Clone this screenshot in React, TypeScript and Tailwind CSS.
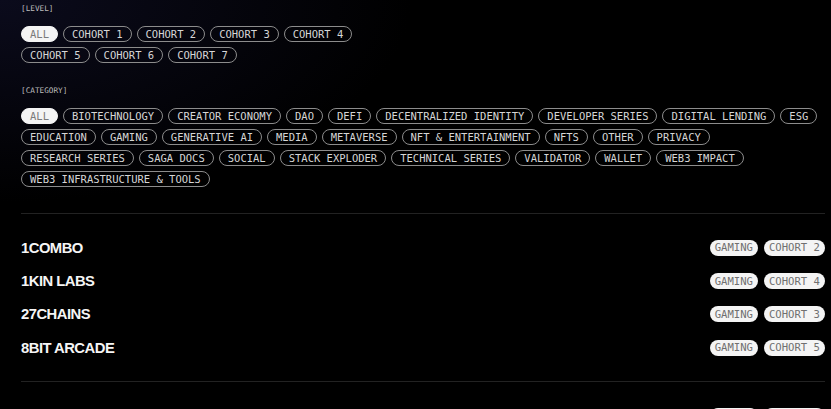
import React from 'react'

const levels = ['ALL', 'COHORT 1', 'COHORT 2', 'COHORT 3', 'COHORT 4', 'COHORT 5', 'COHORT 6', 'COHORT 7']

const categories = [
  'ALL', 'BIOTECHNOLOGY', 'CREATOR ECONOMY', 'DAO', 'DEFI', 'DECENTRALIZED IDENTITY',
  'DEVELOPER SERIES', 'DIGITAL LENDING', 'ESG', 'EDUCATION', 'GAMING', 'GENERATIVE AI',
  'MEDIA', 'METAVERSE', 'NFT & ENTERTAINMENT', 'NFTS', 'OTHER', 'PRIVACY',
  'RESEARCH SERIES', 'SAGA DOCS', 'SOCIAL', 'STACK EXPLODER', 'TECHNICAL SERIES',
  'VALIDATOR', 'WALLET', 'WEB3 IMPACT', 'WEB3 INFRASTRUCTURE & TOOLS',
]

const groups = [
  [
    { name: '1COMBO', tags: ['GAMING', 'COHORT 2'] },
    { name: '1KIN LABS', tags: ['GAMING', 'COHORT 4'] },
    { name: '27CHAINS', tags: ['GAMING', 'COHORT 3'] },
    { name: '8BIT ARCADE', tags: ['GAMING', 'COHORT 5'] },
  ],
  [
    { name: 'ABSTRACT', tags: ['GAMING', 'COHORT 6'] },
  ],
]

const mono = "font-['DejaVu_Sans_Mono','Liberation_Mono',monospace]"

function FilterPill({ label, active }: { label: string; active?: boolean }) {
  return (
    <button
      className={`h-[16px] rounded-full border px-[8px] text-[10.5px] leading-none flex items-center ${mono} ${
        active ? 'bg-[#f4f4f4] border-[#f4f4f4] text-[#7a7a7a]' : 'border-[#8c8c8c] text-[#d6d6d6]'
      }`}
    >
      {label}
    </button>
  )
}

function FilterGroup({ title, items, className = '', listClass = '' }: { title: string; items: string[]; className?: string; listClass?: string }) {
  return (
    <div className={className}>
      <div className={`text-[7.7px] leading-[10px] text-[#bdbdbd] ${mono}`}>[{title}]</div>
      <div className={`mt-[12px] flex flex-wrap gap-x-[5px] gap-y-[5px] ${listClass}`}>
        {items.map((item, i) => (
          <FilterPill key={item + i} label={item} active={i === 0} />
        ))}
      </div>
    </div>
  )
}

export default function App() {
  return (
    <div className="h-[409px] overflow-hidden bg-black bg-[radial-gradient(ellipse_at_top_left,#0b0b1c_0%,#000_35%)] pl-[21px] pr-[6px] pt-[4px]">
      <FilterGroup title="LEVEL" items={levels} listClass="max-w-[400px]" />
      <FilterGroup title="CATEGORY" items={categories} className="mt-[23px]" />

      <div className="mt-[26px]">
        {groups.map((group, gi) => (
          <div key={gi} className="border-t border-[#222] py-[17px]">
            {group.map((p) => (
              <div key={p.name} className="h-[33.33px] flex items-center justify-between">
                <span className="font-['Liberation_Sans',Arial,sans-serif] font-bold text-[14.8px] tracking-[-0.035em] text-[#f5f5f5]">
                  {p.name}
                </span>
                <div className="flex gap-[6px]">
                  {p.tags.map((t) => (
                    <span
                      key={t}
                      className={`h-[16px] rounded-full bg-[#f4f4f4] px-[5px] text-[10.6px] leading-none flex items-center text-[#707070] ${mono}`}
                    >
                      {t}
                    </span>
                  ))}
                </div>
              </div>
            ))}
          </div>
        ))}
      </div>
    </div>
  )
}
